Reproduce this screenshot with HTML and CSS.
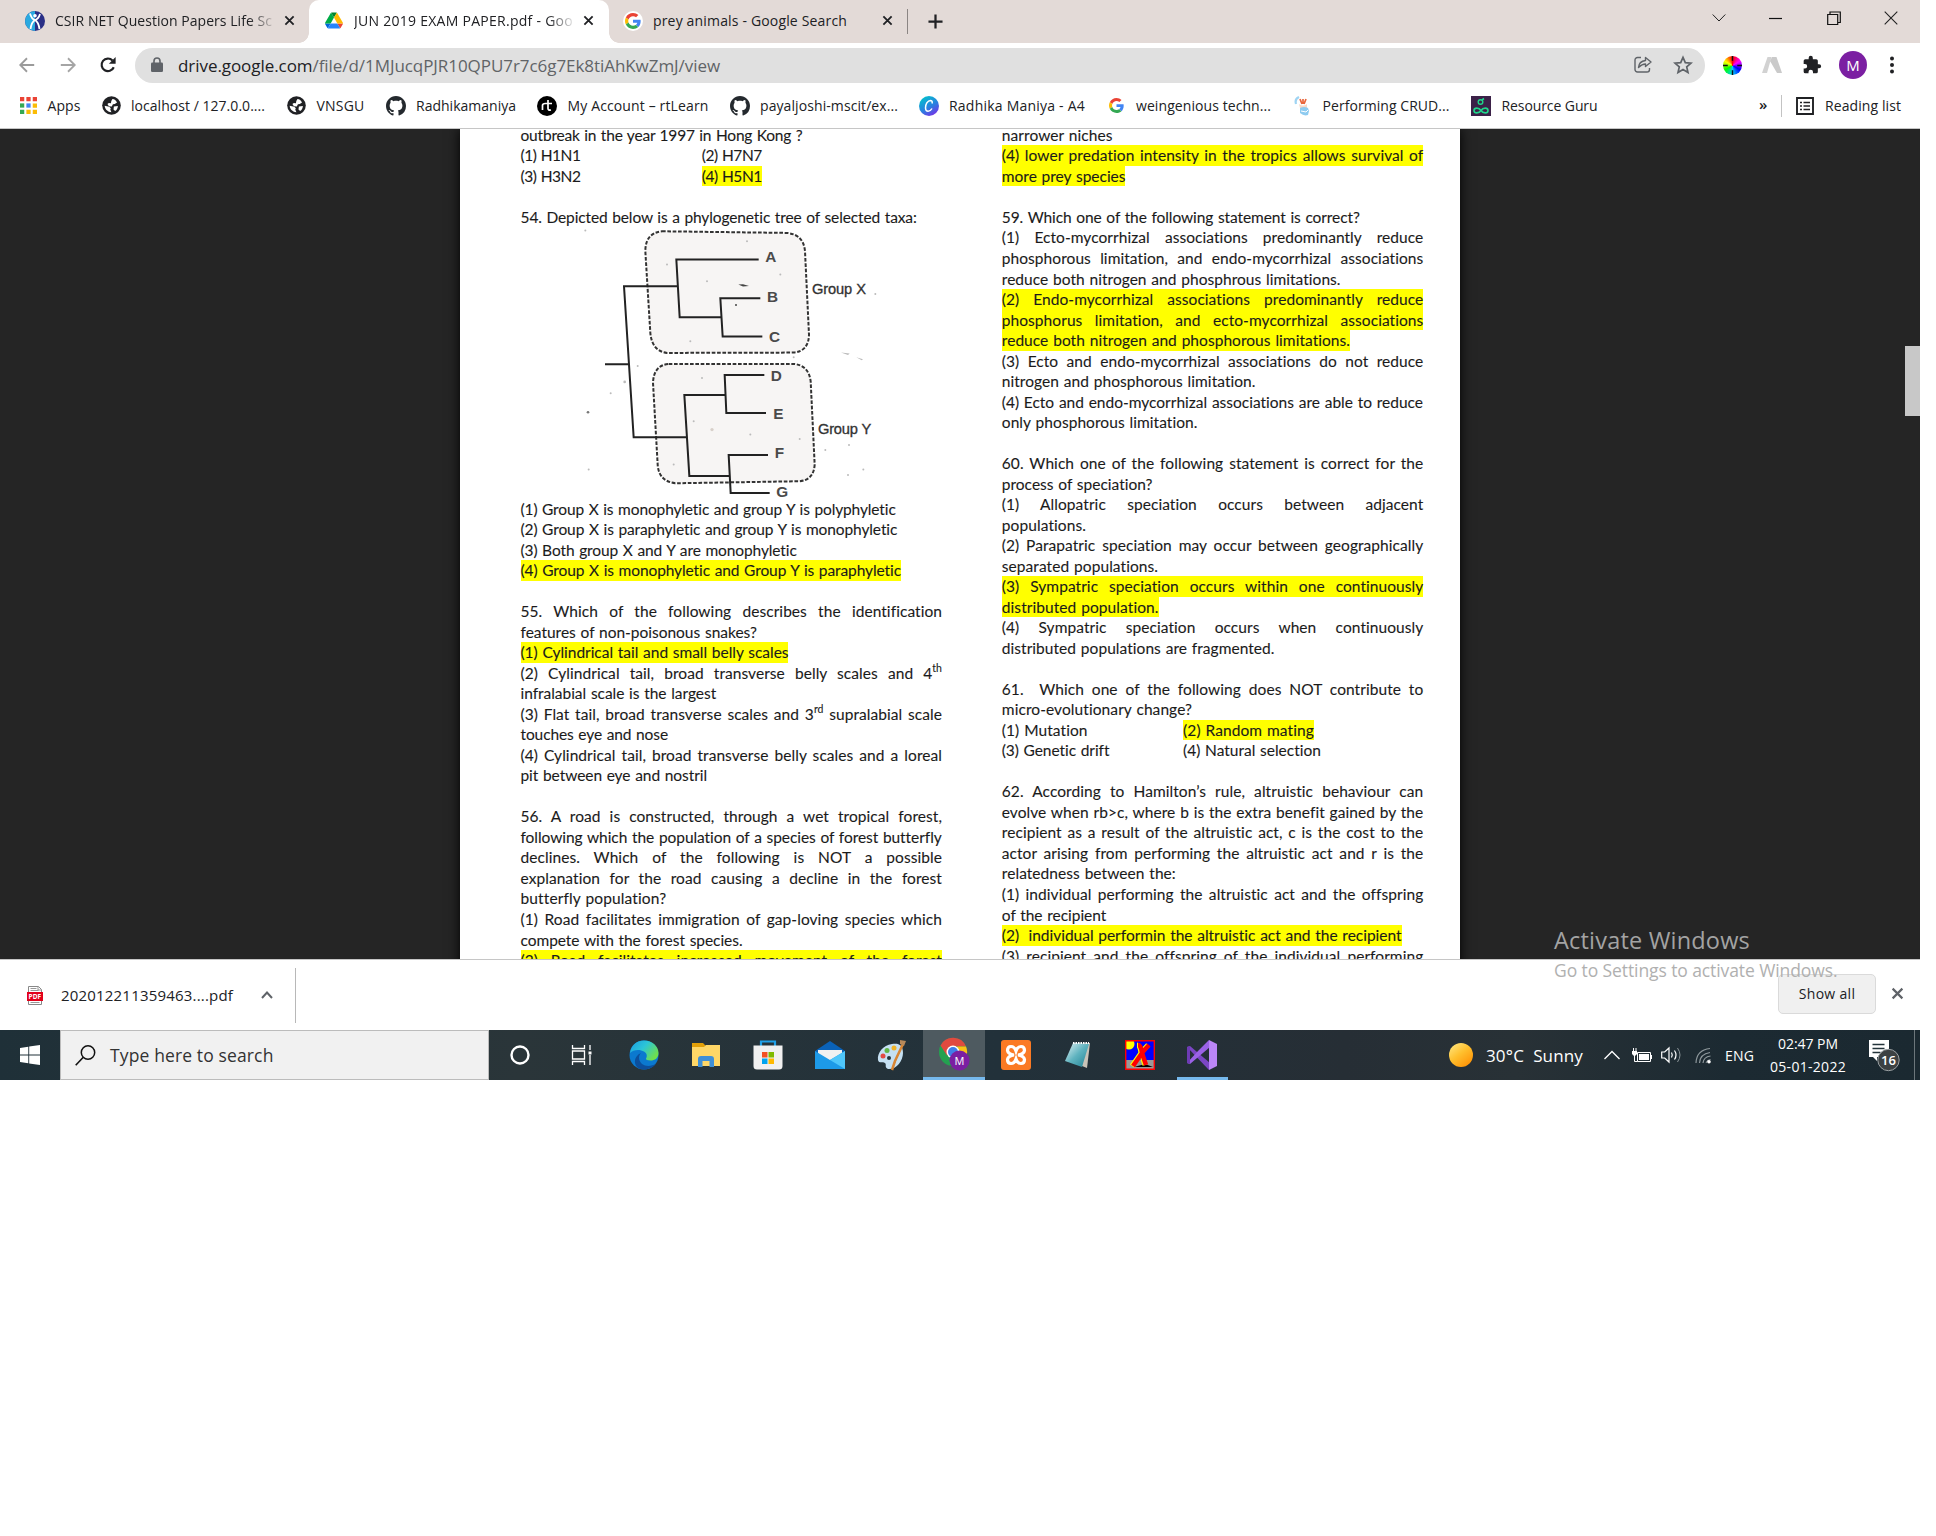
FILE: index.html
```html
<!DOCTYPE html>
<html lang="en">
<head>
<meta charset="utf-8">
<title>JUN 2019 EXAM PAPER.pdf - Google Drive</title>
<link rel="stylesheet" href="styles.css">
</head>
<body>
<svg class="defs" width="0" height="0">
  <defs>
    <symbol id="i-globe" viewBox="0 0 20 20"><circle cx="10" cy="10" r="9.800" fill="#202124"/><path d="M11 3.200c2 .2 4 1.700 4.800 3.600l-2.300 1.700-2 .2-1.200 2.300-3-.3-1.600-2.200 1.500-1.200 2.200.2.400-2.300zM2.800 10.300l4.800 1 1.700 1.500-.6 1.500 1.200 2.700c-3.600 0-6.800-2.700-7.100-6.700zM12.500 11l4.200-.6c0 2.400-1.200 4.300-2.900 5.400l-1.700-1.500z" fill="#fff"/></symbol>
    <symbol id="i-github" viewBox="0 0 16 16"><path fill="#24292e" d="M8 0C3.580 0 0 3.580 0 8c0 3.540 2.290 6.530 5.470 7.590.4.070.55-.17.55-.38 0-.19-.01-.82-.01-1.490-2.010.37-2.530-.49-2.690-.94-.09-.23-.48-.94-.82-1.130-.28-.15-.68-.52-.01-.53.63-.01 1.080.58 1.230.82.72 1.210 1.870.87 2.330.66.070-.52.28-.87.51-1.070-1.780-.2-3.640-.89-3.640-3.950 0-.87.31-1.590.82-2.150-.08-.2-.36-1.020.08-2.120 0 0 .67-.21 2.200.82.64-.18 1.320-.27 2-.27s1.360.09 2 .27c1.530-1.040 2.200-.82 2.200-.82.44 1.100.16 1.920.08 2.120.51.56.82 1.270.82 2.150 0 3.070-1.870 3.750-3.650 3.950.29.25.54.73.54 1.480 0 1.070-.01 1.930-.01 2.200 0 .21.15.46.55.38A8.010 8.010 0 0 0 16 8c0-4.420-3.580-8-8-8z"/></symbol>
    <symbol id="i-google" viewBox="0 0 48 48"><path fill="#EA4335" d="M24 9.500c3.540 0 6.710 1.220 9.210 3.600l6.850-6.850C35.900 2.380 30.470 0 24 0 14.620 0 6.510 5.380 2.560 13.220l7.980 6.190C12.430 13.720 17.740 9.500 24 9.500z"/><path fill="#4285F4" d="M46.980 24.550c0-1.570-.15-3.090-.38-4.550H24v9.020h12.940c-.58 2.960-2.260 5.480-4.780 7.180l7.730 6c4.510-4.180 7.090-10.360 7.090-17.650z"/><path fill="#FBBC05" d="M10.530 28.590c-.48-1.450-.76-2.990-.76-4.590s.27-3.140.76-4.590l-7.980-6.190C.92 16.460 0 20.120 0 24c0 3.880.92 7.540 2.560 10.780z"/><path fill="#34A853" d="M24 48c6.480 0 11.930-2.130 15.890-5.810l-7.730-6c-2.150 1.450-4.920 2.300-8.160 2.300-6.260 0-11.570-4.220-13.470-9.910l-7.980 6.190C6.510 42.620 14.620 48 24 48z"/></symbol>
    <symbol id="i-x" viewBox="0 0 12 12"><path d="M1.500 1.500l9 9M10.500 1.500l-9 9" stroke="currentColor" stroke-width="2" fill="none"/></symbol>
    <linearGradient id="g-edge" x1="0" y1="0" x2="1" y2=".6"><stop offset="0" stop-color="#1a9be0"/><stop offset=".5" stop-color="#2cc5d8"/><stop offset="1" stop-color="#6fe04c"/></linearGradient>
    <linearGradient id="g-canva" x1=".2" y1="0" x2=".8" y2="1"><stop offset="0" stop-color="#00c4cc"/><stop offset=".55" stop-color="#2a7fe0"/><stop offset="1" stop-color="#7d2ae8"/></linearGradient>
    <linearGradient id="g-sun" x1=".1" y1="0" x2=".9" y2="1"><stop offset="0" stop-color="#ffe680"/><stop offset=".45" stop-color="#ffc02e"/><stop offset="1" stop-color="#ff8c00"/></linearGradient>
    <linearGradient id="g-note" x1="0" y1="0" x2="1" y2="1"><stop offset="0" stop-color="#e4f3f5"/><stop offset=".5" stop-color="#5fb3bf"/><stop offset="1" stop-color="#1f7f92"/></linearGradient>
  </defs>
</svg>

<main class="screen">
  <header class="tabs">
    <div class="tab tab-a">
      <svg class="ic20" viewBox="0 0 20 20"><circle cx="10" cy="10" r="10" fill="#2a2f86"/><path d="M10 0a10 10 0 0 0 0 20z" fill="#29a9e0"/><path d="M5 2.500Q6.500 8 10 9q3.500-1 5-6M5.500 18Q6.500 11 10 9q3.500 2 4.500 9" stroke="#fff" stroke-width="1.800" fill="none"/><circle cx="10" cy="4.800" r="1.800" fill="#fff"/></svg>
      <span class="tab-title fade"><span data-w="217">CSIR NET Question Papers Life Sc</span></span>
      <svg class="x"><use href="#i-x"/></svg>
    </div>
    <div class="tab tab-b">
      <svg class="drive" viewBox="0 0 87.300 78"><path d="M6.600 66.850l3.850 6.650c.8 1.400 1.950 2.500 3.300 3.300L27.500 53H0c0 1.550.4 3.100 1.200 4.500z" fill="#0066da"/><path d="M43.650 25L29.900 1.200c-1.350.8-2.500 1.900-3.300 3.300L1.200 48.500C.4 49.900 0 51.450 0 53h27.500z" fill="#00ac47"/><path d="M73.550 76.800c1.350-.8 2.500-1.900 3.300-3.300l9.250-16c.8-1.400 1.200-2.950 1.200-4.500H59.800l5.850 11.500z" fill="#ea4335"/><path d="M43.650 25L57.400 1.200C56.050.4 54.500 0 52.900 0H34.400c-1.600 0-3.150.45-4.500 1.200z" fill="#00832d"/><path d="M59.800 53H27.500L13.750 76.800c1.350.8 2.900 1.200 4.500 1.200h50.800c1.600 0 3.150-.45 4.500-1.200z" fill="#2684fc"/><path d="M73.400 26.500L60.700 4.500c-.8-1.400-1.950-2.500-3.300-3.300L43.650 25 59.800 53h27.450c0-1.550-.4-3.100-1.200-4.500z" fill="#ffba00"/></svg>
      <span class="tab-title fade"><span data-w="219">JUN 2019 EXAM PAPER.pdf - Goo</span></span>
      <svg class="x"><use href="#i-x"/></svg>
    </div>
    <div class="tab tab-c">
      <span class="gdisc"><svg width="16" height="16"><use href="#i-google"/></svg></span>
      <span class="tab-title"><span data-w="194">prey animals - Google Search</span></span>
      <svg class="x"><use href="#i-x"/></svg>
    </div>
    <svg class="plus" viewBox="0 0 16 16"><path d="M8 .5v15M.5 8h15" stroke="#202124" stroke-width="2.400"/></svg>
    <div class="winctl">
      <svg width="14" height="14" viewBox="0 0 14 14"><path d="M.7 3.500L7 10l6.300-6.500" fill="none" stroke="#222"/></svg>
      <svg width="14" height="14" viewBox="0 0 14 14"><path d="M0 7.500h13" stroke="#111" stroke-width="1.200"/></svg>
      <svg width="14" height="14" viewBox="0 0 14 14"><path d="M.7 3.500h10v10h-10zM3 3V1h10.300v10.500H11" fill="none" stroke="#111" stroke-width="1.200"/></svg>
      <svg width="14" height="14" viewBox="0 0 14 14"><path d="M.7.700l12.600 12.600M13.300.7L.7 13.300" stroke="#222" stroke-width="1.100"/></svg>
    </div>
  </header>

  <div class="toolbar">
    <svg class="nav" viewBox="0 0 20 20"><path d="M18 10H3M10 2.500L2.500 10l7.500 7.500" fill="none" stroke="#9b9b9b" stroke-width="2"/></svg>
    <svg class="nav" viewBox="0 0 20 20"><path d="M2 10h15M10 2.500l7.500 7.500-7.500 7.500" fill="none" stroke="#a5a5a5" stroke-width="2"/></svg>
    <svg class="nav" viewBox="0 0 20 20"><path d="M16.400 12.500A7 7 0 1 1 15 5" fill="none" stroke="#202124" stroke-width="2.400"/><path d="M18.500 1v7.500H11z" fill="#202124"/></svg>
    <div class="omni">
      <svg width="12" height="16" viewBox="0 0 12 16"><rect y="5.500" width="12" height="9.500" rx="1.300" fill="#5f6368"/><path d="M3 6V4a3 3 0 0 1 6 0v2" fill="none" stroke="#5f6368" stroke-width="1.600"/></svg>
      <span class="url" data-w="542"><b>drive.google.com</b>/file/d/1MJucqPJR10QPU7r7c6g7Ek8tiAhKwZmJ/view</span>
      <svg class="share" width="18" height="18" viewBox="0 0 18 18"><path d="M7 1.500H3.500a2.500 2.500 0 0 0-2.500 2.500v9.500a2.500 2.500 0 0 0 2.500 2.500h9.500a2.500 2.500 0 0 0 2.500-2.500V12" fill="none" stroke="#5f6368" stroke-width="1.400"/><path d="M11.500 1.500l5.500 4.500-5.500 4.500V8C8.500 8 7 9 4.500 11.500c.3-4 3-6.500 7-7z" fill="none" stroke="#5f6368" stroke-width="1.400" stroke-linejoin="round"/></svg>
      <svg width="20" height="20" viewBox="0 0 20 20"><path d="M10 2.300l2.300 5.300 5.800.5-4.400 3.800 1.300 5.700-5-3-5 3 1.300-5.700L1.900 8.100l5.800-.5z" fill="none" stroke="#5f6368" stroke-width="1.700"/></svg>
    </div>
    <div class="exts">
      <span class="wheel"><svg viewBox="0 0 20 20"><path d="M10 0v5M10 15v5M0 10h5M15 10h5" stroke="#111" stroke-width="1.500"/></svg></span>
      <svg width="20" height="18" viewBox="0 0 20 18"><path d="M5.500 1h4L5 17H0z" fill="#d2d2d2"/><path d="M10 1h4.500L20 17h-5L8 5z" fill="#cacaca"/></svg>
      <svg width="20" height="20" viewBox="0 0 24 24"><path fill="#202124" d="M20.500 11H19V7a2 2 0 0 0-2-2h-4V3.500a2.500 2.500 0 0 0-5 0V5H4a2 2 0 0 0-2 2v3.800h1.500a2.700 2.700 0 0 1 0 5.400H2V20a2 2 0 0 0 2 2h3.800v-1.500a2.700 2.700 0 0 1 5.400 0V22H17a2 2 0 0 0 2-2v-4h1.500a2.500 2.500 0 0 0 0-5z"/></svg>
      <span class="avatar">M</span>
      <svg width="6" height="18" viewBox="0 0 6 18"><circle cx="3" cy="2.500" r="2" fill="#202124"/><circle cx="3" cy="9" r="2" fill="#202124"/><circle cx="3" cy="15.500" r="2" fill="#202124"/></svg>
    </div>
  </div>

  <nav class="marks">
    <div class="mk m1"><svg viewBox="0 0 16 16" width="17" height="17"><path d="M0 0h4v4H0zM6 0h4v4H6zM12 0h4v4h-4z" fill="#ea4335"/><path d="M0 6h4v4H0z" fill="#34a853"/><path d="M6 6h4v4H6z" fill="#4285f4"/><path d="M12 6h4v4h-4zM12 12h4v4h-4zM6 12h4v4H6z" fill="#fbbc05"/><path d="M0 12h4v4H0z" fill="#34a853"/></svg><span data-w="33">Apps</span></div>
    <div class="mk m2"><svg width="19" height="19"><use href="#i-globe"/></svg><span data-w="134">localhost / 127.0.0....</span></div>
    <div class="mk m3"><svg width="19" height="19"><use href="#i-globe"/></svg><span data-w="48">VNSGU</span></div>
    <div class="mk m4"><svg width="20" height="20"><use href="#i-github"/></svg><span data-w="100">Radhikamaniya</span></div>
    <div class="mk m5"><svg width="20" height="20" viewBox="0 0 20 20"><circle cx="10" cy="10" r="10" fill="#000"/><path d="M5.500 14V9.500q0-2 3-2M11 4v8.500q0 2 3 1.500M8.500 7.500H15" stroke="#fff" stroke-width="1.700" fill="none"/></svg><span data-w="141">My Account – rtLearn</span></div>
    <div class="mk m6"><svg width="20" height="20"><use href="#i-github"/></svg><span data-w="138">payaljoshi-mscit/ex...</span></div>
    <div class="mk m7"><svg width="20" height="20" viewBox="0 0 20 20"><circle cx="10" cy="10" r="10" fill="url(#g-canva)"/><path d="M13 7.500q.8-2.700-1.300-3C8.500 4.500 6.300 8.500 6.500 12c.2 4.500 4.500 4 6.500.5" stroke="#fff" stroke-width="1.500" fill="none"/></svg><span data-w="136">Radhika Maniya - A4</span></div>
    <div class="mk m8"><svg width="15" height="15"><use href="#i-google"/></svg><span data-w="135">weingenious techn...</span></div>
    <div class="mk m9"><svg width="18" height="20" viewBox="0 0 18 20"><path d="M2 8q-1.500-5 3-7" stroke="#9fd4f3" stroke-width="2.200" fill="none"/><path d="M9 3v5M6 3l2 5M12 3l-2 5" stroke="#e9663c" stroke-width="1.700"/><path d="M5 8q4 3 8 0v4H6z" fill="#f6d9c8"/><path d="M6 12q4-2 8 0l1 3-1 4q-4 1.500-8-2z" fill="#8ecbf0"/><path d="M7 15l5 1 2-2" stroke="#fff" fill="none"/></svg><span data-w="127">Performing CRUD...</span></div>
    <div class="mk m10"><svg width="20" height="20" viewBox="0 0 20 20"><path d="M0 0h20v20H0z" fill="#3b2148"/><circle cx="9.500" cy="6" r="2.300" fill="none" stroke="#1fd68b" stroke-width="1.400"/><path d="M11 4l2-1.500M10 14.500c-2-3.200-7-3.200-7 0s5 3.200 7 0c2-3.200 7-3.200 7 0s-5 3.200-7 0z" fill="none" stroke="#1fd68b" stroke-width="1.600"/></svg><span data-w="96">Resource Guru</span></div>
    <span class="more">»</span>
    <div class="reading"><svg width="18" height="18" viewBox="0 0 18 18"><path d="M1 1h16v16H1z" fill="none" stroke="#202124" stroke-width="1.900"/><path d="M4 5.500h2M4 9h2M4 12.500h2M7.500 5.500H14M7.500 9H14M7.500 12.500H14" stroke="#202124" stroke-width="1.600"/></svg><span data-w="76">Reading list</span></div>
  </nav>

  <section class="viewer">
    <article class="page">
      <div class="col">
        <p data-w="282">outbreak in the year 1997 in Hong Kong ?</p>
        <div class="two"><p data-w="60">(1) H1N1</p><p data-w="60">(2) H7N7</p></div>
        <div class="two"><p data-w="60">(3) H3N2</p><p class="hl" data-w="60">(4) H5N1</p></div>
        <br>
        <p data-w="396.500">54. Depicted below is a phylogenetic tree of selected taxa:</p>
        <svg class="figure" viewBox="182 308 1263 812">
          <g fill="#f7f5f4" stroke="#333" stroke-width="6" stroke-dasharray="11 5">
            <path d="M605 320L980 325Q1030 330 1034 380L1046 630Q1045 680 1000 684L620 685Q575 680 570 625L555 380Q555 325 605 320z"/>
            <path d="M625 718H1000Q1045 722 1051 770L1063 1020Q1060 1068 1015 1070L645 1076Q595 1070 592 1020L578 775Q580 722 625 718z"/>
          </g>
          <g fill="none" stroke="#222" stroke-width="6">
            <path d="M434 719H507M652 485H491L520 938H680M895 405H648L658 578H782M900 521H780L787 636H906M912 751H793L798 865H917M795 811H672L687 1054H806M923 991H805L811 1105H928"/>
          </g>
          <path d="M834 480l14-1 18 5-18 2z" fill="#444"/>
          <g fill="#bbb"><circle cx="375" cy="318" r="3"/><circle cx="383" cy="863" r="4" fill="#777"/><circle cx="827" cy="541" r="3" fill="#444"/><circle cx="1245" cy="508" r="3"/><circle cx="1166" cy="961" r="3"/><circle cx="1095" cy="976" r="3"/><circle cx="1209" cy="1035" r="3"/><circle cx="1163" cy="1051" r="3"/><circle cx="1000" cy="698" r="3"/><circle cx="493" cy="772" r="4"/><circle cx="532" cy="724" r="3"/><circle cx="451" cy="806" r="3"/><circle cx="385" cy="1035" r="3"/><circle cx="755" cy="915" r="5" fill="#d8d0ca"/><circle cx="1018" cy="943" r="3"/><circle cx="700" cy="890" r="3"/><circle cx="860" cy="350" r="3"/><circle cx="620" cy="420" r="3"/><circle cx="740" cy="470" r="3"/><circle cx="960" cy="450" r="3"/><circle cx="690" cy="650" r="3"/><circle cx="870" cy="930" r="3"/><circle cx="640" cy="1020" r="3"/><circle cx="725" cy="760" r="3"/><path d="M1142 684l26 3-5 4zM1188 698l20 6-4 3z"/></g>
          <g class="taxa"><text x="915" y="413">A</text><text x="920" y="533">B</text><text x="926" y="652">C</text><text x="931" y="769">D</text><text x="939" y="884">E</text><text x="943" y="1001">F</text><text x="948" y="1117">G</text></g>
          <g class="grp"><text x="1055" y="507" textLength="162">Group X</text><text x="1073" y="928" textLength="160">Group Y</text></g>
        </svg>
        <p data-w="375.700">(1) Group X is monophyletic and group Y is polyphyletic</p>
        <p data-w="377.300">(2) Group X is paraphyletic and group Y is monophyletic</p>
        <p data-w="276.500">(3) Both group X and Y are monophyletic</p>
        <p class="hl" data-w="381">(4) Group X is monophyletic and Group Y is paraphyletic</p>
        <br>
        <p class="j">55. Which of the following describes the identification</p>
        <p data-w="236.500">features of non-poisonous snakes?</p>
        <p class="hl" data-w="268">(1) Cylindrical tail and small belly scales</p>
        <p class="j">(2) Cylindrical tail, broad transverse belly scales and 4<sup>th</sup></p>
        <p data-w="195.700">infralabial scale is the largest</p>
        <p class="j">(3) Flat tail, broad transverse scales and 3<sup>rd</sup> supralabial scale</p>
        <p data-w="147.500">touches eye and nose</p>
        <p class="j">(4) Cylindrical tail, broad transverse belly scales and a loreal</p>
        <p data-w="186.500">pit between eye and nostril</p>
        <br>
        <p class="j">56. A road is constructed, through a wet tropical forest,</p>
        <p data-w="421">following which the population of a species of forest butterfly</p>
        <p class="j">declines. Which of the following is NOT a possible</p>
        <p class="j">explanation for the road causing a decline in the forest</p>
        <p data-w="145.500">butterfly population?</p>
        <p class="j">(1) Road facilitates immigration of gap-loving species which</p>
        <p data-w="222">compete with the forest species.</p>
        <p class="j hl">(2) Road facilitates increased movement of the forest</p>
      </div>
      <div class="col">
        <p data-w="110.700">narrower niches</p>
        <p class="j hl">(4) lower predation intensity in the tropics allows survival of</p>
        <p class="hl" data-w="123.700">more prey species</p>
        <br>
        <p data-w="358">59. Which one of the following statement is correct?</p>
        <p class="j">(1) Ecto-mycorrhizal associations predominantly reduce</p>
        <p class="j">phosphorous limitation, and endo-mycorrhizal associations</p>
        <p data-w="339">reduce both nitrogen and phosphrous limitations.</p>
        <p class="j hl">(2) Endo-mycorrhizal associations predominantly reduce</p>
        <p class="j hl">phosphorus limitation, and ecto-mycorrhizal associations</p>
        <p class="hl" data-w="348.500">reduce both nitrogen and phosphorous limitations.</p>
        <p class="j">(3) Ecto and endo-mycorrhizal associations do not reduce</p>
        <p data-w="254">nitrogen and phosphorous limitation.</p>
        <p data-w="421.500">(4) Ecto and endo-mycorrhizal associations are able to reduce</p>
        <p data-w="196">only phosphorous limitation.</p>
        <br>
        <p class="j">60. Which one of the following statement is correct for the</p>
        <p data-w="151">process of speciation?</p>
        <p class="j">(1) Allopatric speciation occurs between adjacent</p>
        <p data-w="84.500">populations.</p>
        <p class="j">(2) Parapatric speciation may occur between geographically</p>
        <p data-w="156.500">separated populations.</p>
        <p class="j hl">(3) Sympatric speciation occurs within one continuously</p>
        <p class="hl" data-w="157">distributed population.</p>
        <p class="j">(4) Sympatric speciation occurs when continuously</p>
        <p data-w="273">distributed populations are fragmented.</p>
        <br>
        <p class="j">61. &nbsp;Which one of the following does NOT contribute to</p>
        <p data-w="190.500">micro-evolutionary change?</p>
        <div class="two"><p data-w="86">(1) Mutation</p><p class="hl" data-w="131">(2) Random mating</p></div>
        <div class="two"><p data-w="107.500">(3) Genetic drift</p><p data-w="138">(4) Natural selection</p></div>
        <br>
        <p class="j">62. According to Hamilton’s rule, altruistic behaviour can</p>
        <p class="j">evolve when rb&gt;c, where b is the extra benefit gained by the</p>
        <p class="j">recipient as a result of the altruistic act, c is the cost to the</p>
        <p class="j">actor arising from performing the altruistic act and r is the</p>
        <p data-w="174">relatedness between the:</p>
        <p class="j">(1) individual performing the altruistic act and the offspring</p>
        <p data-w="104.500">of the recipient</p>
        <p class="hl" data-w="400">(2) &nbsp;individual performin the altruistic act and the recipient</p>
        <p class="j">(3) recipient and the offspring of the individual performing</p>
      </div>
    </article>
    <div class="thumb"></div>
  </section>

  <section class="downloads">
    <div class="dl">
      <svg width="16" height="19" viewBox="0 0 16 19"><path d="M1.500.5h10l3 3v15h-13z" fill="#fff" stroke="#888"/><path d="M3.500 2.500h6M3.500 4.500h8M3.500 16.500h9M11 .5v3.500h3.500" stroke="#999" fill="none"/><path d="M0 6h16v9H0z" fill="#e2001a"/><text x="1.600" y="13" class="pdf">PDF</text></svg>
      <span class="fn" data-w="172">202012211359463....pdf</span>
      <svg class="up" width="12" height="8" viewBox="0 0 12 8"><path d="M1 7l5-5.500L11 7" fill="none" stroke="#5f6368" stroke-width="2"/></svg>
    </div>
    <button class="showall"><span data-w="56.500">Show all</span></button>
    <svg class="dlx"><use href="#i-x"/></svg>
  </section>

  <footer class="taskbar">
    <div class="start"><svg width="20" height="20" viewBox="0 0 20 20"><path d="M0 3l8.300-1.200v7.700H0zM9.200 1.600L20 0v9.500H9.200zM0 10.400h8.300v7.800L0 17zM9.200 10.400H20V20L9.200 18.400z" fill="#fff"/></svg></div>
    <div class="search"><svg width="21" height="21" viewBox="0 0 21 21"><circle cx="13" cy="7.500" r="6.700" fill="none" stroke="#111" stroke-width="1.500"/><path d="M8.300 12.300L.7 20.300" stroke="#111" stroke-width="1.600"/></svg><span data-w="163.500">Type here to search</span></div>
    <div class="app"><svg width="22" height="22" viewBox="0 0 22 22"><circle cx="11" cy="11" r="8.500" fill="none" stroke="#fff" stroke-width="2.400"/></svg></div>
    <div class="app"><svg width="22" height="20" viewBox="0 0 22 20"><path d="M1.500 0v3.500h12V0M1.500 20v-3.500h12V20M1.500 6h12v8h-12zM19 0v5M19 10v10" fill="none" stroke="#fff" stroke-width="1.300"/><path d="M17.500 6.500h3v3h-3z" fill="#fff"/></svg></div>
    <div class="app"><svg width="30" height="30" viewBox="0 0 30 30"><circle cx="15" cy="15" r="14.500" fill="#0b79cf"/><path d="M1 13C2 5 8 .5 15 .5c8.500 0 14.500 6 14.500 12.500 0 5-3.500 7.500-8 7.500-3 0-5-1-4.500-2 1.500-2 1-5.500-2-7C11 9 4 9.500 1 13z" fill="url(#g-edge)"/><path d="M12 13c-3 3-2.500 8 1 11 4 3 10 2 14 0-4 5-12 7-18 4-5-4-4-12 3-15z" fill="#0c4f9c"/></svg></div>
    <div class="app"><svg width="28" height="26" viewBox="0 0 28 26"><path d="M0 1h11l3 3h14v9H0z" fill="#e3a008"/><path d="M0 5h12l2-2h14v21H0z" fill="#ffd767"/><path d="M6 25v-8q0-3 3-3h10q3 0 3 3v8h-4.500v-6h-7v6z" fill="#3f8fd6"/></svg></div>
    <div class="app"><svg width="30" height="30" viewBox="0 0 30 30"><path d="M8 6V1.500h14V6" fill="none" stroke="#1ea0e8" stroke-width="2.200"/><path d="M.5 5.500h29V26q0 3.500-3.500 3.500H4Q.5 29.500.5 26z" fill="#f0f0f0"/><path d="M9 12h5.500v5.500H9z" fill="#f25022"/><path d="M15.500 12H21v5.500h-5.500z" fill="#7fba00"/><path d="M9 18.500h5.500V24H9z" fill="#00a4ef"/><path d="M15.500 18.500H21V24h-5.500z" fill="#ffb900"/></svg></div>
    <div class="app"><svg width="30" height="28" viewBox="0 0 30 28"><path d="M0 10L15 0l15 10v5H0z" fill="#0a62b8"/><path d="M3 9h24v5L15 23 3 15z" fill="#f1f1f1"/><path d="M0 10l15 9 15-9v18H0z" fill="#1d9ae8"/><path d="M15 19l15-9v18z" fill="#4fc6fa"/></svg></div>
    <div class="app"><svg width="30" height="32" viewBox="0 0 30 32"><path d="M15 5C6 6 0 14 1 21c1 4 5 1 7 3s-1 4 3 6c8 1 15-8 15-16S22 4 15 5z" fill="#c5e0f2"/><circle cx="6" cy="17" r="2.500" fill="#e24a43"/><circle cx="10" cy="11.500" r="2.500" fill="#62b646"/><circle cx="17" cy="9" r="2.500" fill="#f0b429"/><circle cx="12" cy="19" r="2" fill="#24343b"/><path d="M26 5L18 22l-3 9" stroke="#d98634" stroke-width="2.500"/><path d="M23 1l6 1-2 5-4-2z" fill="#b7895a"/></svg></div>
    <div class="app active"><svg width="32" height="36" viewBox="0 0 32 36"><circle cx="15" cy="15" r="14" fill="#24a150"/><path d="M2.500 8.500A14 14 0 0 1 28 9.500H15l-6 9z" fill="#e04a3f"/><path d="M28 9.500a14 14 0 0 1-12 19.500L21 17.500l-2-8z" fill="#fbc116"/><circle cx="15" cy="15" r="6.500" fill="#fff"/><circle cx="15" cy="15" r="5" fill="#3f7ee8"/><circle cx="21.500" cy="23.500" r="10" fill="#7b1fa2"/><text x="21.500" y="27.500" class="badge-m">M</text></svg></div>
    <div class="app"><svg width="30" height="30" viewBox="0 0 30 30"><rect width="30" height="30" rx="3" fill="#fb7a24"/><path d="M13 15Q7 14 6.500 10.500 6.500 6.500 10 6.500q3.500 0 5 4.500 1.500-4.500 5-4.500 3.500 0 3.500 4Q23 14 17 15q6 1 6.500 4.500 0 4-3.500 4-3.500 0-5-4.500-1.500 4.500-5 4.500-3.500 0-3.500-4Q7 16 13 15z" fill="none" stroke="#fff" stroke-width="3.200"/></svg></div>
    <div class="app"><svg width="28" height="28" viewBox="0 0 28 28"><path d="M9 3l17-1-3 25-5-2z" fill="#c9c3b8"/><path d="M9 2l16 1-7 23L1 20z" fill="url(#g-note)"/><path d="M9 2h16" stroke="#fff" stroke-width="2" stroke-dasharray="1.500 1"/></svg></div>
    <div class="app"><svg width="30" height="30" viewBox="0 0 30 30"><path d="M0 0h30v30H0z" fill="#00f"/><path d="M0 20h30v10H0z" fill="#999"/><circle cx="4" cy="4" r="5.500" fill="#ff0"/><path d="M9 27h19l-8-3z" fill="#000"/><path d="M13 5q3 0 4 8l4 12M24 5q-4 4-7 8l-9 13" stroke="#ff0" stroke-width="5" fill="none" transform="translate(-1 0)"/><path d="M13 5q3 0 4 8l4 12M24 5q-4 4-7 8l-9 13" stroke="red" stroke-width="4.500" fill="none"/><path d="M.7.7h28.600v28.600H.7z" fill="none" stroke="red" stroke-width="1.400"/></svg></div>
    <div class="app vs"><svg width="30" height="30" viewBox="0 0 30 30"><path d="M0 7l3-1 20 17-1 7z" fill="#7b46c4"/><path d="M0 23l3 1L23 7l-1-7L11 11z" fill="#9b62e6"/><path d="M0 7l3-1v18l-3-1z" fill="#6e3bb5"/><path d="M22 0l8 4v22l-8 4z" fill="#bb86f7"/></svg></div>
    <div class="tray">
      <svg class="sun" viewBox="0 0 24 24"><circle cx="12" cy="12" r="12" fill="url(#g-sun)"/></svg>
      <span class="wx" data-w="97">30°C &nbsp;Sunny</span>
      <svg class="t-up" width="16" height="10" viewBox="0 0 16 10"><path d="M.5 9L8 1.500 15.500 9" fill="none" stroke="#fff" stroke-width="1.300"/></svg>
      <svg class="t-bat" width="20" height="15" viewBox="0 0 20 15"><path d="M5.500 4.500h13v9h-13z" fill="none" stroke="#fff"/><path d="M7 6h10v6H7zM18.500 7H20v4h-1.500zM0 3h5v3L3 8H2L0 6z" fill="#fff"/><path d="M1.500 0v3M4 0v3M2.500 7v6.500h3" stroke="#fff" fill="none"/></svg>
      <svg class="t-snd" width="21" height="18" viewBox="0 0 21 18"><path d="M.7 6h3L8 2v14l-4.300-4h-3z" fill="none" stroke="#fff" stroke-width="1.200"/><path d="M10.500 6.500q1.500 2.500 0 5M13.500 4.500q3 4.500 0 9" stroke="#fff" fill="none" stroke-width="1.200"/><path d="M16.500 2q5 7 0 14" stroke="#8b9498" fill="none"/></svg>
      <svg class="t-wifi" width="17" height="17" viewBox="0 0 17 17"><path d="M1 16Q1.500 3 15 1.500M4.500 16Q5 7 15 5.500M8 16q.5-6 7.500-7" fill="none" stroke="#8e989c" stroke-width="1.200"/><path d="M11 16q.5-3 4.500-3.500" stroke="#8e989c" fill="none"/><circle cx="14" cy="14.700" r="1.800" fill="#fff"/></svg>
      <span class="eng" data-w="29">ENG</span>
      <div class="clock"><span data-w="60">02:47 PM</span><span data-w="76">05-01-2022</span></div>
      <svg class="note" width="34" height="36" viewBox="0 0 34 36"><path d="M1 3h20v17H9v4l-4-4H1z" fill="#fff"/><path d="M4.500 7.500h12M4.500 11.500h12M4.500 15.500h8" stroke="#24343b" stroke-width="1.300"/><circle cx="20.500" cy="23" r="10.700" fill="#3c4143" stroke="#9aa0a3"/><text x="20.500" y="27.800" class="cnt">16</text></svg>
    </div>
  </footer>

  <div class="watermark"><span class="w1" data-w="196">Activate Windows</span><span class="w2" data-w="283.500">Go to Settings to activate Windows.</span></div>
</main>
<script src="fit.js"></script>
</body>
</html>
```
FILE: styles.css
```css
* { box-sizing: border-box; }
body { margin: 0; background: #fff; font-family: "Open Sans", "Noto Sans", sans-serif; font-size: 14px; color: #202124; }
.defs { position: absolute; }
svg { display: block; flex: none; }
.screen { position: relative; width: 1920px; height: 1080px; display: flex; flex-direction: column; overflow: hidden; }
[data-w] { white-space: nowrap; width: fit-content; }

/* tab strip */
.tabs { height: 43px; flex: none; display: flex; align-items: center; background: #e3dad7; }
.tab { display: flex; align-items: center; height: 43px; padding-bottom: 2px; }
.tab .x { width: 11px; height: 11px; margin-left: auto; }
.tab-a { width: 309px; padding-left: 25px; padding-right: 14px; }
.tab-b { position: relative; width: 300px; padding-left: 16px; padding-right: 15px; background: #fff; border-radius: 10px 10px 0 0; }
.tab-b::before, .tab-b::after { content: ""; position: absolute; bottom: 0; width: 10px; height: 10px; }
.tab-b::before { left: -10px; background: radial-gradient(circle at 0 0, transparent 9.5px, #fff 10px); }
.tab-b::after { right: -10px; background: radial-gradient(circle at 100% 0, transparent 9.5px, #fff 10px); }
.tab-c { width: 299px; padding-left: 13px; padding-right: 14px; border-right: 1px solid #8b8583; height: 25px; }
.ic20 { width: 20px; height: 20px; }
.drive { width: 18px; height: 17px; }
.gdisc { width: 20px; height: 20px; margin-left: 1px; border-radius: 50%; background: #fff; display: grid; place-items: center; }
.tab-title { margin-left: 10px; overflow: hidden; display: flex; width: 220px; }
.tab-b .tab-title { margin-left: 11px; }
.fade { -webkit-mask-image: linear-gradient(90deg, #000 88%, transparent 101%); mask-image: linear-gradient(90deg, #000 88%, transparent 101%); }
.plus { width: 15px; height: 15px; margin-left: 20px; margin-top: -1px; }
.winctl { margin-left: auto; display: flex; gap: 43.500px; padding-right: 22px; margin-top: -7px; }

/* toolbar */
.toolbar { height: 45px; flex: none; display: flex; align-items: center; padding-left: 18px; padding-bottom: 1px; }
.nav { width: 18px; height: 18px; margin-right: 22.500px; }
.nav:nth-child(3) { margin-right: 18px; }
.omni { width: 1570px; height: 35px; margin-top: 1px; border-radius: 18px; background: #e0e0e0; display: flex; align-items: center; padding: 0 12px 1px 16px; }
.url { margin-left: 15px; font-size: 17px; color: #616467; }
.url b { font-weight: 400; color: #202124; }
.share { margin-left: auto; margin-right: 21px; }
.exts { display: flex; align-items: center; margin-left: 18px; }
.wheel { width: 19px; height: 19px; border-radius: 50%; background: conic-gradient(red, #f0f, #00f, #0cf, #0f0, #ff0, red); margin-right: 20px; }
.exts svg:nth-child(2) { margin-right: 20px; }
.exts svg:nth-child(3) { margin-right: 17px; }
.avatar { width: 28px; height: 28px; margin-right: 22px; border-radius: 50%; background: #7b1fa2; color: #fff; display: grid; place-items: center; font-size: 15px; }

/* bookmarks */
.marks { height: 41px; flex: none; display: flex; align-items: center; padding-left: 20px; padding-bottom: 5px; border-bottom: 1px solid #c6c6c6; }
.mk { display: flex; align-items: center; gap: 10.500px; flex: none; }
.mk span, .reading span { padding-bottom: 1px; }
.m1 { width: 81.500px; } .m2 { width: 185px; } .m3 { width: 99.500px; gap: 11px; } .m4 { width: 151px; gap: 10px; } .m5 { width: 193px; }
.m6 { width: 189px; gap: 10px; } .m7 { width: 190px; gap: 10px; } .m8 { width: 185px; gap: 12px; } .m9 { width: 177px; } .m10 { width: 288px; }
.more { width: 22px; font-weight: 600; font-size: 15px; padding-bottom: 3px; }
.reading { height: 22px; border-left: 1px solid #c3c3c3; display: flex; align-items: center; padding-left: 14px; gap: 11px; }

/* document viewer */
.viewer { position: relative; height: 830px; flex: none; background: #252525; overflow: hidden; }
.page { width: 1000px; height: 900px; margin-left: 460px; background: #fff; display: flex; padding: 0 0 0 60.500px; gap: 60.300px; box-shadow: 0 0 12px #000; }
.col { width: 421px; margin-top: -4.100px; font: 15.500px/20.520px Lato, sans-serif; color: #1b1b1b; -webkit-text-stroke: .1px #1b1b1b; word-spacing: .8px; }
.col p { margin: 0; height: 20.520px; white-space: nowrap; }
.col .j { width: 421.500px; text-align-last: justify; letter-spacing: .06px; word-spacing: 0; }
.col .hl { background: #ff0; }
.two { display: grid; grid-template-columns: 181.300px 1fr; }
.figure { width: 421px; height: 271.200px; overflow: visible; }
sup { font-size: 10.500px; line-height: 0; vertical-align: 7px; }
.taxa text { font: 700 46px "Liberation Sans", sans-serif; fill: #4a4a4a; }
.grp text { font: 44px "Liberation Sans", sans-serif; fill: #333; stroke: #333; stroke-width: 1px; }
.thumb { position: absolute; right: 0; top: 217px; width: 15px; height: 70px; background: #c8c8c8; }

/* download shelf */
.downloads { height: 71px; flex: none; border-top: 1px solid #c6c6c6; display: flex; align-items: center; }
.dl { width: 296px; height: 55px; border-right: 1px solid #b8b8b8; display: flex; align-items: center; padding-left: 27px; }
.fn { margin-left: 18px; font-size: 15px; }
.up { margin-left: 28px; }
.pdf { font: 700 6.500px "Open Sans", sans-serif; fill: #fff; }
.showall { margin: 0 0 3px auto; width: 98px; height: 40px; padding: 0; border: 1px solid #dadada; border-radius: 5px; background: #f0f0f0; font: 14px "Open Sans", sans-serif; color: #202124; display: grid; place-items: center; }
.dlx { width: 13px; height: 13px; color: #5f6368; margin: 0 16px 3px 15px; }

/* taskbar */
.taskbar { height: 50px; flex: none; display: flex; align-items: center; color: #fff; background: linear-gradient(90deg, #1f3038, #2a3539 27%, #22313a 52%, #262e35 70%, #283136 79%, #1c2a32 90%, #1b2931); }
.start { width: 60px; padding-left: 20px; }
.search { width: 429px; height: 50px; background: #f1f1f1; border: 1px solid #bcbcbc; display: flex; align-items: center; padding-left: 14px; gap: 14px; color: #333; font-size: 17.500px; }
.app { width: 62px; height: 50px; display: grid; place-items: center; flex: none; }
.active { background: #4e5a60; border-bottom: 3px solid #76b9ed; padding-top: 3px; }
.vs { background: linear-gradient(#76b9ed, #76b9ed) center bottom / 51px 3px no-repeat; }
.badge-m { font: 11px "Open Sans", sans-serif; fill: #fff; text-anchor: middle; }
.tray { margin-left: auto; display: flex; align-items: center; height: 50px; width: 471px; }
.sun { width: 24px; height: 24px; }
.wx { font-size: 17px; margin-left: 13px; }
.t-up { margin-left: 21px; } .t-bat { margin-left: 12px; } .t-snd { margin-left: 9px; } .t-wifi { margin-left: 13px; }
.eng { margin-left: 13px; }
.clock { width: 76px; margin-left: 16px; display: flex; flex-direction: column; align-items: center; line-height: 23px; }
.note { margin-left: 22px; }
.tray::after { content: ""; width: 1px; height: 50px; background: #6c767b; margin-left: 12px; }
.cnt { font: 600 13px "Open Sans", sans-serif; fill: #fff; text-anchor: middle; }

/* activation notice, floats over viewer and shelf */
.watermark { position: absolute; left: 1554px; top: 921px; display: flex; flex-direction: column; color: #a3a3a3; }
.w1 { font-size: 23.500px; line-height: 38px; }
.w2 { font-size: 17.500px; line-height: 22px; color: #b0b0b0; }
```
FILE: fit.js
```js
// Tracks each label so that it fills its design width (data-w, in px).
document.querySelectorAll('[data-w]').forEach(function (el) {
  var target = parseFloat(el.dataset.w);
  var n = el.textContent.length;
  var now = el.getBoundingClientRect().width;
  el.style.letterSpacing = ((target - now) / n).toFixed(3) + 'px';
});
```
